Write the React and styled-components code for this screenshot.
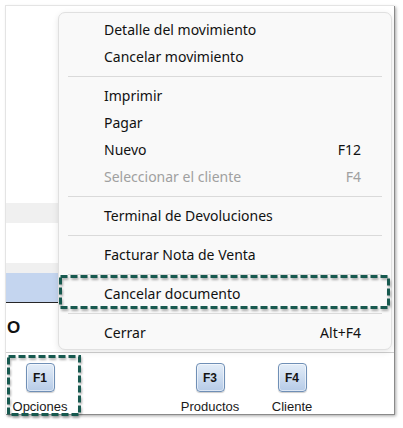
import React from "react";
import styled, { createGlobalStyle } from "styled-components";

const Global = createGlobalStyle`
  html, body { margin: 0; padding: 0; background: #ffffff; }
  body { width: 403px; height: 428px; overflow: hidden; font-family: "Noto Sans", "Liberation Sans", sans-serif; }
`;

const Page = styled.div`
  position: relative;
  width: 403px;
  height: 428px;
  padding: 5px 0 0 5px;
  box-sizing: border-box;
`;

const Window = styled.div`
  position: relative;
  width: 389px;
  height: 409px;
  box-sizing: border-box;
  border-top: 1px solid #e4e4e4;
  border-left: 1px solid #e4e4e4;
  background: #ffffff;
  box-shadow: 1px 1px 0 #8a8a8a, 2px 2px 3px rgba(0, 0, 0, 0.35);
  display: flex;
  flex-direction: column;
`;

const Workspace = styled.div`
  flex: 1;
  display: flex;
`;

const LeftPanel = styled.div`
  width: 60px;
  display: flex;
  flex-direction: column;
`;

const Band = styled.div`
  height: ${(p) => p.$h}px;
  background: ${(p) => p.$bg};
  flex: none;
  box-sizing: border-box;
  border-bottom: ${(p) => (p.$line ? "1px solid #262626" : "none")};
`;

const TotalRow = styled.div`
  flex: 1;
  display: flex;
  align-items: center;
  padding-left: 1px;
  font-family: "Liberation Sans", Arial, sans-serif;
  font-weight: 700;
  font-size: 17px;
  color: #111;
`;

const Toolbar = styled.div`
  height: 62px;
  flex: none;
  border-top: 1px solid #cfcfcf;
  box-sizing: border-box;
  display: flex;
  align-items: flex-start;
  padding-top: 10px;
`;

const ToolItem = styled.div`
  width: 68px;
  margin-left: ${(p) => p.$offset || 0}px;
  display: flex;
  flex-direction: column;
  align-items: center;
  gap: 7px;
`;

const KeyButton = styled.div`
  width: 29px;
  height: 29px;
  box-sizing: border-box;
  border: 1px solid #6f8fb6;
  border-radius: 4px;
  background: linear-gradient(#e3edf8, #b6cbe7);
  box-shadow: inset 0 0 0 1px rgba(255, 255, 255, 0.55), 0 1px 1px rgba(0, 0, 0, 0.2);
  display: flex;
  align-items: center;
  justify-content: center;
  font-family: "Liberation Sans", Arial, sans-serif;
  font-weight: 700;
  font-size: 12px;
  color: #141414;
`;

const ToolLabel = styled.div`
  font-family: "Liberation Sans", Arial, sans-serif;
  font-size: 13px;
  line-height: 15px;
  color: #1a1a1a;
  white-space: nowrap;
`;

const Menu = styled.div`
  position: absolute;
  left: 52px;
  top: 6px;
  width: 334px;
  box-sizing: border-box;
  background: #f9f9f9;
  border: 1px solid #e0e0e0;
  border-radius: 7px;
  padding: 3px 0;
  box-shadow: 0 2px 6px rgba(0, 0, 0, 0.1);
`;

const Item = styled.div`
  height: 27px;
  display: flex;
  align-items: center;
  justify-content: space-between;
  padding: 0 30px 0 45px;
  font-size: 14px;
  color: ${(p) => (p.$disabled ? "#a0a0a0" : "#111111")};
`;

const Separator = styled.div`
  height: 12px;
  display: flex;
  align-items: center;
  padding: 0 9px;
  &::before {
    content: "";
    flex: 1;
    height: 1px;
    background: #dadada;
  }
`;

const Highlight = styled.svg`
  position: absolute;
  left: ${(p) => p.$x}px;
  top: ${(p) => p.$y}px;
  overflow: visible;
  filter: drop-shadow(1px 2px 1px rgba(0, 0, 0, 0.3));
`;

function DashedBox({ x, y, w, h }) {
  return (
    <Highlight $x={x} $y={y} width={w} height={h} viewBox={`0 0 ${w} ${h}`}>
      <rect x="1.5" y="1.5" width={w - 3} height={h - 3} fill="none" stroke="#17594f" strokeWidth="3" strokeDasharray="7 3" />
    </Highlight>
  );
}

const menu = [
  { t: "Detalle del movimiento" },
  { t: "Cancelar movimiento" },
  "sep",
  { t: "Imprimir" },
  { t: "Pagar" },
  { t: "Nuevo", k: "F12" },
  { t: "Seleccionar el cliente", k: "F4", d: true },
  "sep",
  { t: "Terminal de Devoluciones" },
  "sep",
  { t: "Facturar Nota de Venta" },
  "sep",
  { t: "Cancelar documento" },
  "sep",
  { t: "Cerrar", k: "Alt+F4" },
];

export default function App() {
  return (
    <>
      <Global />
      <Page>
        <Window>
          <Workspace>
            <LeftPanel>
              <Band $h={197} $bg="#ffffff" />
              <Band $h={20} $bg="#f0f0f0" />
              <Band $h={40} $bg="#ffffff" />
              <Band $h={10} $bg="#f0f0f0" />
              <Band $h={30} $bg="#c4d5ef" $line />
              <TotalRow>O</TotalRow>
            </LeftPanel>
          </Workspace>
          <Toolbar>
            <ToolItem>
              <KeyButton>F1</KeyButton>
              <ToolLabel>Opciones</ToolLabel>
            </ToolItem>
            <ToolItem $offset={102}>
              <KeyButton>F3</KeyButton>
              <ToolLabel>Productos</ToolLabel>
            </ToolItem>
            <ToolItem $offset={14}>
              <KeyButton>F4</KeyButton>
              <ToolLabel>Cliente</ToolLabel>
            </ToolItem>
          </Toolbar>
          <Menu>
            {menu.map((m, i) =>
              m === "sep" ? (
                <Separator key={i} />
              ) : (
                <Item key={i} $disabled={m.d}>
                  <span>{m.t}</span>
                  {m.k && <span>{m.k}</span>}
                </Item>
              )
            )}
          </Menu>
        </Window>
        <DashedBox x={59} y={275} w={331} h={34} />
        <DashedBox x={7} y={355} w={74} h={61} />
      </Page>
    </>
  );
}
